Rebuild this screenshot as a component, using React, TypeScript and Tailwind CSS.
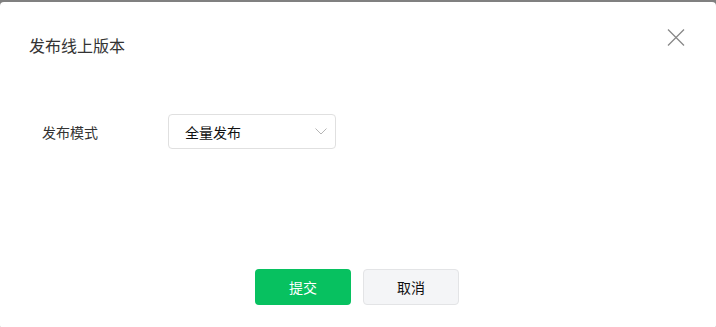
import React from "react";

export default function App() {
  return (
    <div className="h-[327px] w-[716px] overflow-hidden bg-[#808080] pt-[2px] font-['Noto_Sans_CJK_SC','Noto_Sans',sans-serif]">
      <div className="flex h-[327px] w-[716px] flex-col rounded-[4px] bg-white">
        <div className="flex items-start justify-between pl-[29px] pr-[31px] pt-[31px]">
          <h2 className="text-[16px] leading-6 font-normal text-[#333]">发布线上版本</h2>
          <button className="-mt-[5px] flex h-[19px] w-[18px] items-center justify-center text-[#888]">
            <svg width="18" height="19" viewBox="0 0 18 19" fill="none" stroke="currentColor" strokeWidth="1.3">
              <path d="M1 1.5 L17 17.5 M17 1.5 L1 17.5" />
            </svg>
          </button>
        </div>

        <div className="mt-[57px] flex items-center pl-[42px]">
          <label className="w-[126px] text-[14px] leading-5 text-[#333]">发布模式</label>
          <div className="flex h-[35px] w-[168px] items-center justify-between rounded-[4px] border border-[#e0e0e0] pl-[16px] pr-[8px]">
            <span className="text-[14px] leading-5 text-[#111]">全量发布</span>
            <svg width="12" height="7" viewBox="0 0 12 7" fill="none" stroke="#b5b5b5" strokeWidth="1">
              <path d="M0.5 0.5 L6 6 L11.5 0.5" />
            </svg>
          </div>
        </div>

        <div className="mt-[120px] flex justify-center gap-[12px] pr-[2px]">
          <button className="h-[36px] w-[96px] rounded-[4px] bg-[#07c160] text-[14px] text-white">提交</button>
          <button className="h-[36px] w-[96px] rounded-[4px] border border-[#e3e4e6] bg-[#f4f5f7] text-[14px] text-[#111]">取消</button>
        </div>
      </div>
    </div>
  );
}
